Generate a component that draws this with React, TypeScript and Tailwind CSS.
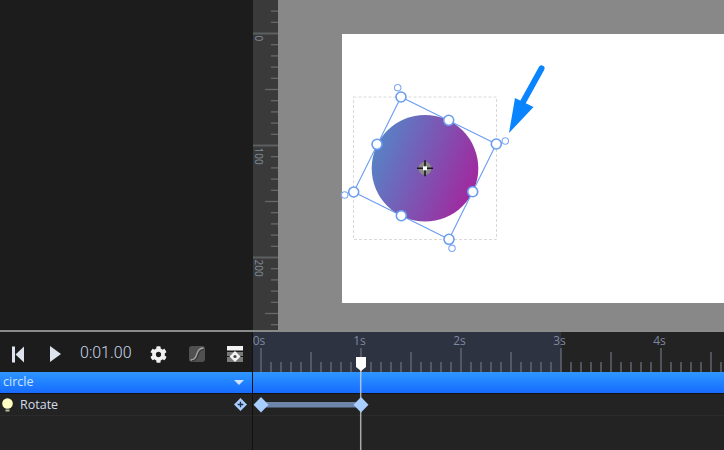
import { FaCog } from "react-icons/fa";

const font = { fontFamily: '"Open Sans", "Liberation Sans", sans-serif' };
const timeFont = { fontFamily: 'Roboto, "Liberation Sans", sans-serif' };

const rulerTicks = Array.from({ length: 29 }, (_, i) => i - 2);
const timeTicks = Array.from({ length: 47 }, (_, i) => i);
const timeLabels = ["0s", "1s", "2s", "3s", "4s"];

const corners = [
  [401, 97],
  [496.3, 144],
  [449, 239.3],
  [353.7, 192],
];
const midpoints = [
  [448.7, 120.3],
  [472.7, 191.7],
  [401.3, 215.7],
  [377, 144.3],
];
const rotateHandles = [
  [397.7, 87.7],
  [505.3, 141],
  [452, 248.3],
  [344.7, 195],
];

function VerticalRuler() {
  return (
    <svg width="25" height="330" viewBox="253 0 25 330" className="block shrink-0 bg-[#3a3a3a]">
      {rulerTicks.map((i) => {
        const y = 33.5 + i * 11.2;
        const major = i % 10 === 0;
        const medium = i % 5 === 0;
        return (
          <line
            key={i}
            x1={major ? 253 : medium ? 265 : 271}
            x2={278}
            y1={y}
            y2={y}
            stroke={major ? "#5a5f60" : "#646a6a"}
            strokeWidth={major ? 2 : 1.3}
          />
        );
      })}
      {[
        ["0", 33.5],
        ["100", 145.5],
        ["200", 257.5],
      ].map(([label, y]) => (
        <text
          key={label}
          x={0}
          y={0}
          transform={`translate(255 ${Number(y) + 2}) rotate(90)`}
          fontSize="10"
          fill="#7f8f9c"
          style={font}
        >
          {label}
        </text>
      ))}
    </svg>
  );
}

function Stage() {
  return (
    <div className="relative flex-1 bg-[#888888] pl-[64px] pt-[34px]">
      <div className="h-[269px] bg-white" />
      <svg
        width="446"
        height="330"
        viewBox="278 0 446 330"
        className="absolute left-0 top-0 block"
        fill="none"
      >
        <defs>
          <linearGradient id="fill" x1="0" y1="0.3" x2="1" y2="0.7">
            <stop offset="0" stopColor="#5585c8" />
            <stop offset="1" stopColor="#a4259d" />
          </linearGradient>
        </defs>
        <rect x="353.5" y="97" width="143" height="142.5" stroke="#d9d9d9" strokeDasharray="3 2" />
        <circle cx="425" cy="168.3" r="53.3" fill="url(#fill)" />
        <polygon
          points={corners.map((p) => p.join(",")).join(" ")}
          stroke="#6a9cf0"
          strokeWidth="1.1"
        />
        {rotateHandles.map(([x, y]) => (
          <circle key={x} cx={x} cy={y} r="3.2" fill="white" stroke="#7fa9f2" strokeWidth="1.1" />
        ))}
        {[...corners, ...midpoints].map(([x, y]) => (
          <circle key={x} cx={x} cy={y} r="5" fill="white" stroke="#6a9cf0" strokeWidth="1.6" />
        ))}
        <circle cx="425" cy="168.3" r="6.5" fill="#8a8a8a" />
        <path d="M417 168.3h16M425 160.3v16" stroke="#1a1a1a" strokeWidth="1.6" />
        <rect x="423" y="166.3" width="4" height="4" fill="white" />
        <path d="M541.5 68.5 523 102" stroke="#0a84ff" strokeWidth="6" strokeLinecap="round" />
        <polygon points="509,133 515,98 533.5,107" fill="#0a84ff" />
      </svg>
    </div>
  );
}

function TimeRuler() {
  return (
    <svg width="471" height="40" viewBox="253 332 471 40" className="block">
      <rect x="253" y="332" width="308" height="40" fill="#2d3340" />
      {timeTicks.map((i) => {
        const x = 261 + i * 10;
        const top = i % 10 === 0 ? 348 : i % 5 === 0 ? 352 : 362;
        return <line key={i} x1={x} x2={x} y1={top} y2={372} stroke="#656974" strokeWidth="1.4" />;
      })}
      {timeLabels.map((label, i) => (
        <text
          key={label}
          x={i === 0 ? 259 : 259.5 + i * 100}
          y={344.5}
          textAnchor="middle"
          fontSize="12"
          fill="#7f88a0"
          style={font}
        >
          {label}
        </text>
      ))}
    </svg>
  );
}

function Playhead() {
  return (
    <svg
      width="471"
      height="118"
      viewBox="253 332 471 118"
      className="pointer-events-none absolute left-0 top-0 block"
    >
      <line x1="360.7" x2="360.7" y1="368" y2="450" stroke="#d8d8d8" strokeOpacity="0.75" strokeWidth="1.5" />
      <polygon points="356,357 366,357 366,367 361,371 356,367" fill="white" />
      <rect x="261" y="402" width="100" height="5.5" fill="#6f86ab" />
      <polygon points="261,397 268.5,404.7 261,412.4 253.5,404.7" fill="#a8cdff" />
      <polygon points="361,397 368.5,404.7 361,412.4 353.5,404.7" fill="#a8cdff" />
    </svg>
  );
}

function Toolbar() {
  return (
    <div className="flex h-[40px] items-center bg-[#1c1c1c] text-[#dfe5ee]">
      <svg width="12" height="17" viewBox="0 0 12 17" className="ml-[12px] mt-[4px] block">
        <rect x="0" y="0.5" width="3" height="16" fill="#dde4ee" />
        <polygon points="12,0.5 12,16.5 3.5,8.5" fill="#dde4ee" />
      </svg>
      <svg width="11" height="16" viewBox="0 0 11 16" className="ml-[26px] mt-[4px] block">
        <polygon points="0,0 11,8 0,16" fill="#dde4ee" />
      </svg>
      <span
        className="ml-[19px] mt-[1px] w-[52px] text-[16px] font-light leading-none text-[#c9d4e4]"
        style={timeFont}
      >
        0:01.00
      </span>
      <FaCog className="ml-[18px] mt-[4px] shrink-0 text-[#f0f0f0]" size={17} />
      <svg width="16" height="16" viewBox="0 0 16 16" className="ml-[22px] mt-[4px] block">
        <rect width="16" height="16" rx="3" fill="#505050" />
        <path d="M1.5 14C10 14 5.5 2 14.5 2" fill="none" stroke="#a8a8a8" strokeWidth="1.3" />
        <path d="M3 15C11 15 7 4 15 3.5" fill="none" stroke="#333333" strokeWidth="1" />
      </svg>
      <svg width="16" height="16" viewBox="0 0 16 16" className="ml-[22px] mt-[4px] block">
        <rect width="16" height="4.5" fill="#f2f2f2" />
        <rect y="6" width="16" height="4" fill="#7a7a7a" />
        <rect y="11" width="16" height="5" fill="#7a7a7a" />
        <polygon points="8,5 13.5,10.5 8,16 2.5,10.5" fill="#f2f2f2" />
        <circle cx="8" cy="10.5" r="1.6" fill="#444444" />
      </svg>
    </div>
  );
}

export default function App() {
  return (
    <div className="flex h-[450px] w-[724px] flex-col overflow-hidden bg-[#1c1c1c]">
      <div className="flex h-[330px]">
        <aside className="w-[253px] shrink-0 bg-[#1c1c1c]" />
        <VerticalRuler />
        <Stage />
      </div>
      <div className="h-[2px] bg-[#8a8a8a]" />
      <div className="flex flex-1">
        <div className="flex w-[253px] shrink-0 flex-col border-r border-[#111111] bg-[#232323]">
          <Toolbar />
          <div
            className="flex h-[21px] items-center justify-between bg-gradient-to-b from-[#2f96ff] to-[#186bff] pl-[3px] pr-[8px] text-[12.5px] text-[#cfe4ff]"
            style={font}
          >
            <span>circle</span>
            <svg width="10" height="5" viewBox="0 0 10 5" className="block">
              <polygon points="0,0 10,0 5,5" fill="#cfe2ff" />
            </svg>
          </div>
          <div className="h-px bg-[#111111]" />
          <div className="flex h-[22px] items-center justify-between border-b border-[#2b2b2b] pl-[2px] pr-[5px]">
            <div className="flex items-center gap-[7px]">
              <svg width="11" height="14" viewBox="0 0 11 14" className="block">
                <circle cx="5.5" cy="5.5" r="5.3" fill="#fdfdc4" />
                <rect x="3.5" y="11.5" width="4" height="2" fill="#b9b9a0" />
              </svg>
              <span className="mt-[1px] text-[12.5px] text-[#d3dcea]" style={font}>
                Rotate
              </span>
            </div>
            <svg width="13" height="13" viewBox="0 0 13 13" className="block">
              <polygon points="6.5,0 13,6.5 6.5,13 0,6.5" fill="#a8cdff" />
              <path d="M3.7 6.5h5.6M6.5 3.7v5.6" stroke="#1e2b44" strokeWidth="1.3" />
            </svg>
          </div>
        </div>
        <div className="relative flex flex-1 flex-col bg-[#232323]">
          <TimeRuler />
          <div className="h-[21px] bg-gradient-to-b from-[#2f96ff] to-[#186bff]" />
          <div className="h-px bg-[#111111]" />
          <div className="h-[22px] border-b border-[#2b2b2b]" />
          <Playhead />
        </div>
      </div>
    </div>
  );
}
